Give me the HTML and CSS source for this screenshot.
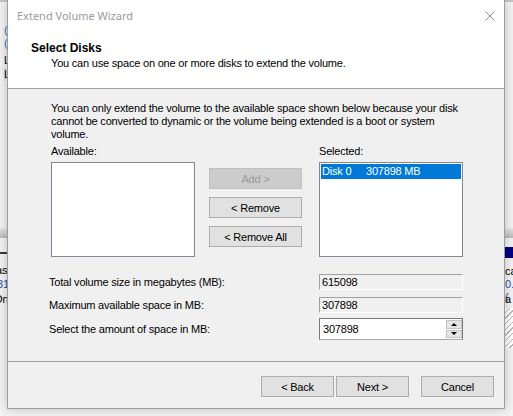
FILE: index.html
```html
<!DOCTYPE html>
<html lang="en">
<head>
    <meta charset="UTF-8">
    <meta name="viewport" content="width=device-width, initial-scale=1.0">
    <title>Extend Volume Wizard</title>
    <link rel="stylesheet" href="styles.css">
</head>
<body>
    <div class="desktop">
        <!-- disk management window peeking out behind the wizard -->
        <div class="backdrop">
            <div class="bg-line"></div>
            <span class="frag paren" style="top:24px">(</span>
            <span class="frag paren" style="top:37px">(</span>
            <span class="frag" style="top:54px">L</span>
            <span class="frag shaded" style="top:68px">L</span>
            <div class="band"></div>
            <div class="disk-bar"></div>
            <div class="disk-head"></div>
            <span class="frag" style="top:264px;left:-4px">as</span>
            <span class="frag blue" style="top:278px;left:-3px">31</span>
            <span class="frag" style="top:293px;left:-6px">On</span>
            <span class="frag" style="top:265px;left:505px">ca</span>
            <span class="frag blue" style="top:278px;left:505px">0.(</span>
            <span class="frag" style="top:293px;left:505px">a</span>
            <div class="hatch"></div>
        </div>

        <div class="wizard">
            <div class="titlebar">
                <span>Extend Volume Wizard</span>
                <svg width="10" height="10" viewBox="0 0 10 10">
                    <path d="M0.5 0.5 L9.5 9.5 M9.5 0.5 L0.5 9.5" stroke="#8c8c8c" stroke-width="1" fill="none"/>
                </svg>
            </div>
            <div class="header">
                <h1>Select Disks</h1>
                <p>You can use space on one or more disks to extend the volume.</p>
            </div>
            <div class="content">
                <p class="note">You can only extend the volume to the available space shown below because your disk<br>cannot be converted to dynamic or the volume being extended is a boot or system<br>volume.</p>
                <div class="picker">
                    <div class="caption">Available:</div>
                    <div></div>
                    <div class="caption">Selected:</div>
                    <div class="listbox"></div>
                    <div class="actions">
                        <button class="btn" disabled>Add &gt;</button>
                        <button class="btn">&lt; Remove</button>
                        <button class="btn">&lt; Remove All</button>
                    </div>
                    <div class="listbox">
                        <div class="item selected"><span class="disk">Disk 0</span><span>307898 MB</span></div>
                    </div>
                </div>
                <div class="fields">
                    <div class="field">
                        <span class="field-label">Total volume size in megabytes (MB):</span>
                        <div class="readonly">615098</div>
                    </div>
                    <div class="field second">
                        <span class="field-label">Maximum available space in MB:</span>
                        <div class="readonly">307898</div>
                    </div>
                    <div class="field third">
                        <span class="field-label">Select the amount of space in MB:</span>
                        <div class="spin">
                            <span class="spin-value">307898</span>
                            <div class="spin-btns">
                                <div class="spin-btn"><span class="arrow-up"></span></div>
                                <div class="spin-btn"><span class="arrow-down"></span></div>
                            </div>
                        </div>
                    </div>
                </div>
            </div>
            <div class="footer">
                <button class="btn nav">&lt; Back</button>
                <button class="btn nav next">Next &gt;</button>
                <button class="btn nav cancel">Cancel</button>
            </div>
        </div>
    </div>
</body>
</html>
```

FILE: styles.css
```css
body {
    margin: 0;
    font-family: "Liberation Sans", Arial, sans-serif;
    font-size: 11px;
    letter-spacing: -0.2px;
    color: #000;
}
.desktop {
    position: relative;
    width: 513px;
    height: 416px;
    overflow: hidden;
    background: #f3f3f3;
}

/* background window bits */
.backdrop {
    position: absolute;
    inset: 0;
}
.bg-line {
    position: absolute;
    top: 0;
    left: 0;
    right: 0;
    height: 2px;
    background: #c4c4c4;
}
.frag {
    position: absolute;
    left: 4px;
    font-size: 11px;
    line-height: 13px;
    letter-spacing: 0;
}
.frag.paren {
    color: #2b6cc4;
}
.frag.shaded {
    background: #e4e4e4;
}
.frag.blue {
    color: #1f4fa8;
}
.band {
    position: absolute;
    top: 228px;
    left: 0;
    right: 0;
    height: 10px;
    background: linear-gradient(#e8e8e8, #b9b9b9);
}
.disk-bar {
    position: absolute;
    top: 252px;
    left: 0;
    width: 10px;
    height: 2px;
    background: #3a3a3a;
}
.disk-head {
    position: absolute;
    top: 247px;
    left: 500px;
    right: 0;
    height: 11px;
    background: #000080;
}
.hatch {
    position: absolute;
    top: 308px;
    left: 505px;
    width: 8px;
    height: 40px;
    background: repeating-linear-gradient(135deg, #fff 0 3px, #b8b8b8 3px 4px);
}

/* wizard dialog */
.wizard {
    position: absolute;
    left: 7px;
    top: 0;
    width: 498px;
    height: 409px;
    box-sizing: border-box;
    display: flex;
    flex-direction: column;
    background: #f0f0f0;
    border: 1px solid #9d9d9d;
    border-top: none;
    box-shadow: 0 0 10px rgba(0,0,0,0.22);
}
.titlebar {
    height: 31px;
    display: flex;
    align-items: center;
    justify-content: space-between;
    padding: 0 9px;
    background: #fff;
    color: #999;
    font-family: "Noto Sans", "Open Sans", sans-serif;
    font-size: 11px;
    letter-spacing: 0;
}
.header {
    height: 58px;
    box-sizing: border-box;
    background: #fff;
    border-bottom: 1px solid #a0a0a0;
    padding: 10px 0 0 23px;
}
.header h1 {
    margin: 0;
    font-size: 12px;
    line-height: 14px;
    letter-spacing: 0;
}
.header p {
    margin: 1px 0 0 20px;
    line-height: 14px;
}
.content {
    flex: 1;
    padding: 13px 0 0 43px;
}
.note {
    margin: 0;
    line-height: 13px;
    white-space: nowrap;
}
.picker {
    display: grid;
    grid-template-columns: 144px 124px 144px;
    row-gap: 4px;
    margin-top: 4px;
}
.caption {
    line-height: 13px;
}
.listbox {
    height: 95px;
    box-sizing: border-box;
    background: #fff;
    border: 1px solid #828790;
    padding: 1px;
}
.item {
    height: 15px;
    line-height: 15px;
    padding-left: 1px;
    display: flex;
}
.item.selected {
    background: #0078d7;
    color: #fff;
}
.item .disk {
    width: 44px;
}
.actions {
    display: flex;
    flex-direction: column;
    gap: 8px;
    padding: 6px 0 0 14px;
}
.btn {
    width: 93px;
    height: 21px;
    padding: 0;
    background: #e1e1e1;
    border: 1px solid #adadad;
    font-family: "Liberation Sans", Arial, sans-serif;
    font-size: 11px;
    letter-spacing: -0.2px;
    color: #000;
}
.btn:disabled {
    background: #cccccc;
    border-color: #bfbfbf;
    color: #9a9a9a;
}
.fields {
    margin: 17px 0 0 -2px;
}
.field {
    display: flex;
    align-items: center;
}
.field.second {
    margin-top: 7px;
}
.field.third {
    margin-top: 5px;
}
.field-label {
    width: 270px;
}
.readonly {
    width: 144px;
    height: 16px;
    box-sizing: border-box;
    border: 1px solid #a0a0a0;
    border-right-color: #fff;
    border-bottom-color: #fff;
    padding-left: 2px;
    line-height: 14px;
}
.spin {
    width: 144px;
    height: 22px;
    box-sizing: border-box;
    display: flex;
    background: #fff;
    border: 1px solid #7a7a7a;
    border-bottom-color: #aaa;
}
.spin-value {
    flex: 1;
    padding-left: 3px;
    line-height: 20px;
}
.spin-btns {
    width: 16px;
    display: flex;
    flex-direction: column;
    gap: 1px;
    padding: 1px 0;
}
.spin-btn {
    flex: 1;
    display: flex;
    align-items: center;
    justify-content: center;
    background: #e5e5e5;
    border: 1px solid #c4c4c4;
}
.arrow-up {
    border: 3px solid transparent;
    border-top: none;
    border-bottom: 3px solid #000;
}
.arrow-down {
    border: 3px solid transparent;
    border-bottom: none;
    border-top: 3px solid #000;
}
.footer {
    height: 47px;
    box-sizing: border-box;
    border-top: 1px solid #a0a0a0;
    display: flex;
    justify-content: flex-end;
    align-items: flex-start;
    padding: 14px 10px 0 0;
}
.btn.nav {
    width: 73px;
}
.btn.next {
    margin-left: 2px;
}
.btn.cancel {
    margin-left: 12px;
}
```
